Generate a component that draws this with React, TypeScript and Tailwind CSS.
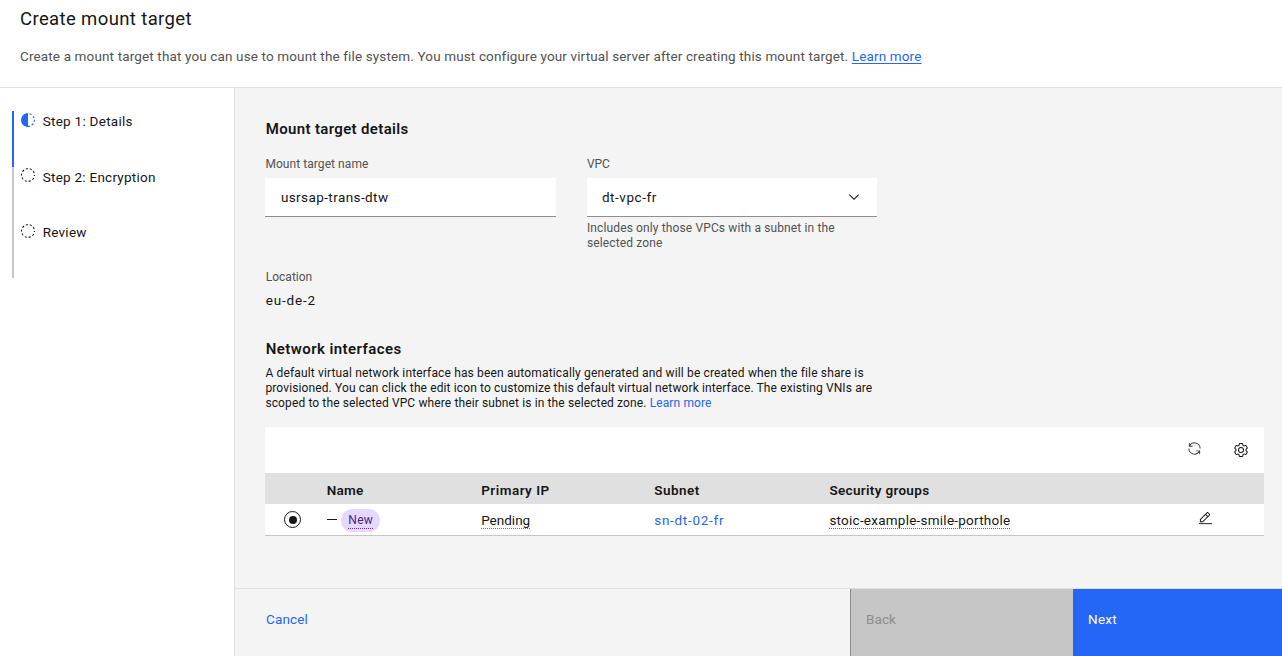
import React from 'react';

type IconProps = { className?: string };

const HalfCircleIcon = ({ className }: IconProps) => (
  <svg viewBox="0 0 16 16" className={className} fill="none">
    <path d="M8 1a7 7 0 0 0 0 14z" fill="#2466f6" />
    <path d="M8 1.6a6.4 6.4 0 0 1 0 12.8" stroke="#2466f6" strokeWidth="1.1" strokeDasharray="2.2 1.8" strokeDashoffset="-1.6" />
  </svg>
);

const DashedCircleIcon = ({ className }: IconProps) => (
  <svg viewBox="0 0 16 16" className={className} fill="none">
    <circle cx="8" cy="8" r="6.45" stroke="#161616" strokeWidth="1.1" strokeDasharray="2.05 2" strokeDashoffset="1" />
  </svg>
);

const ChevronIcon = ({ className }: IconProps) => (
  <svg viewBox="0 0 16 16" className={className} fill="#161616">
    <path d="M8 11 3 6l.7-.7L8 9.6l4.3-4.3.7.7z" />
  </svg>
);

const RenewIcon = ({ className }: IconProps) => (
  <svg viewBox="0 0 32 32" className={className} fill="#3c3c3c">
    <path d="M12 10H6.78A11 11 0 0 1 27 16h2A13 13 0 0 0 6 7.68V4H4v8h8z" />
    <path d="M20 22h5.22A11 11 0 0 1 5 16H3a13 13 0 0 0 23 8.32V28h2v-8h-8z" />
  </svg>
);

const SettingsIcon = ({ className }: IconProps) => (
  <svg viewBox="0 0 32 32" className={className} fill="#161616">
    <path d="M27,16.76c0-.25,0-.5,0-.76s0-.51,0-.77l1.92-1.68A2,2,0,0,0,29.3,11L26.94,7a2,2,0,0,0-1.73-1,2,2,0,0,0-.64.1l-2.43.82a11.35,11.35,0,0,0-1.31-.75l-.51-2.52a2,2,0,0,0-2-1.61H13.64a2,2,0,0,0-2,1.61l-.51,2.52a11.48,11.48,0,0,0-1.32.75L7.43,6.06A2,2,0,0,0,6.79,6,2,2,0,0,0,5.06,7L2.7,11a2,2,0,0,0,.41,2.51L5,15.24c0,.25,0,.5,0,.76s0,.51,0,.77L3.11,18.45A2,2,0,0,0,2.7,21L5.06,25a2,2,0,0,0,1.73,1,2,2,0,0,0,.64-.1l2.43-.82a11.35,11.35,0,0,0,1.31.75l.51,2.52a2,2,0,0,0,2,1.61h4.72a2,2,0,0,0,2-1.61l.51-2.52a11.48,11.48,0,0,0,1.32-.75l2.42.82a2,2,0,0,0,.64.1,2,2,0,0,0,1.73-1L29.3,21a2,2,0,0,0-.41-2.51ZM25.21,24l-3.43-1.16a8.86,8.86,0,0,1-2.71,1.57L18.36,28H13.64l-.71-3.55a9.36,9.36,0,0,1-2.7-1.57L6.79,24,4.43,20l2.72-2.4a8.9,8.9,0,0,1,0-3.13L4.43,12,6.79,8l3.43,1.16a8.86,8.86,0,0,1,2.71-1.57L13.64,4h4.72l.71,3.55a9.36,9.36,0,0,1,2.7,1.57L25.21,8,27.57,12l-2.72,2.4a8.9,8.9,0,0,1,0,3.13L27.57,20Z" />
    <path d="M16 22a6 6 0 1 1 6-6 5.94 5.94 0 0 1-6 6Zm0-10a4 4 0 0 0 0 8 4 4 0 0 0 0-8Z" />
  </svg>
);

const EditIcon = ({ className }: IconProps) => (
  <svg viewBox="0 0 32 32" className={className} fill="#161616">
    <path d="M2 26h28v2H2z" />
    <path d="M25.4 9c.8-.8.8-2 0-2.8l-3.6-3.6c-.8-.8-2-.8-2.8 0l-15 15V24h6.4L25.4 9zM20.4 4 24 7.6l-3 3L17.4 7l3-3zM6 22v-3.6l10-10 3.6 3.6-10 10H6z" />
  </svg>
);

const steps = [
  { label: 'Step 1: Details', tracking: 'tracking-[0.27px]', bar: 'h-[55.5px] border-[#2466f6]', Icon: HalfCircleIcon },
  { label: 'Step 2: Encryption', tracking: 'tracking-[0.255px]', bar: 'h-[55.5px] border-[#c6c6c6]', Icon: DashedCircleIcon },
  { label: 'Review', tracking: 'tracking-[0.25px]', bar: 'h-[56px] border-[#c6c6c6]', Icon: DashedCircleIcon },
];

function Sidebar() {
  return (
    <nav className="w-[235px] shrink-0 border-r border-[#e0e0e0] bg-white pt-[23px] pl-3">
      {steps.map(({ label, tracking, bar, Icon }) => (
        <div key={label} className={`flex items-start border-l-2 pl-[5px] ${bar}`}>
          <Icon className="mt-[0.8px] ml-[0.8px] size-4" />
          <span className={`ml-[6.9px] pt-[0.4px] leading-5 ${tracking}`}>{label}</span>
        </div>
      ))}
    </nav>
  );
}

function Fields() {
  return (
    <div className="flex gap-[30.5px]">
      <div className="w-[291px]">
        <div className="h-5 pt-px text-xs leading-5 tracking-[0.065px] text-[#525252]">Mount target name</div>
        <div className="mt-[5px] flex h-[39px] items-center border-b border-[#8d8d8d] bg-white pl-[15.5px]">
          <span className="tracking-[0.41px]">usrsap-trans-dtw</span>
        </div>
      </div>
      <div className="w-[290.5px]">
        <div className="h-5 pt-px text-xs leading-5 text-[#525252]">VPC</div>
        <div className="mt-[5px] flex h-[39px] items-center justify-between border-b border-[#8d8d8d] bg-white pr-[15px] pl-[15px]">
          <span className="tracking-[0.56px]">dt-vpc-fr</span>
          <ChevronIcon className="size-4" />
        </div>
        <p className="mt-[4px] text-xs leading-[15.4px] tracking-[0.13px] text-[#525252]">
          Includes only those VPCs with a subnet in the
          <br />
          selected zone
        </p>
      </div>
    </div>
  );
}

const grid = 'grid grid-cols-[61.3px_154.5px_173px_175.2px_1fr_66px] items-center';

function InterfaceTable() {
  return (
    <div className="mt-[15px] w-[999px] bg-white">
      <div className="flex h-[46px] items-start justify-end pr-[15px]">
        <RenewIcon className="mt-3.5 size-[15px]" />
        <SettingsIcon className="mt-[15px] ml-[31px] size-4" />
      </div>
      <div className={`${grid} h-[31px] bg-[#e0e0e0] pt-[3px] font-semibold`}>
        <span />
        <span className="tracking-[0.3px]">Name</span>
        <span className="tracking-[0.49px]">Primary IP</span>
        <span className="tracking-[0.46px]">Subnet</span>
        <span className="tracking-[0.33px]">Security groups</span>
        <span />
      </div>
      <div className={`${grid} h-8 border-b border-[#c6c6c6] pt-px`}>
        <span className="ml-[19px] flex size-[17px] items-center justify-center rounded-full border border-[#161616]">
          <span className="size-2 rounded-full bg-[#161616]" />
        </span>
        <span className="flex items-center">
          <span className="mb-px h-px w-2.5 bg-[#161616]" />
          <span className="mt-px ml-[4.5px] flex h-[23px] w-[39px] justify-center rounded-full bg-[#e4d9fd] pt-[3px] text-xs leading-4 tracking-[0.3px] text-[#491d8b]">
            <span className="h-[17px] border-b border-dotted border-[#6929c4]">New</span>
          </span>
        </span>
        <span>
          <span className="inline-block h-[18px] border-b border-dotted border-[#6f6f6f] leading-[18px]">Pending</span>
        </span>
        <span className="tracking-[0.72px] text-[#2466f6]">sn-dt-02-fr</span>
        <span>
          <span className="inline-block h-[18px] border-b border-dotted border-[#2466f6] leading-[18px] tracking-[0.24px]">
            stoic-example-smile-porthole
          </span>
        </span>
        <EditIcon className="mb-[3px] size-[15px]" />
      </div>
    </div>
  );
}

export default function App() {
  return (
    <div className="flex h-[656px] w-[1282px] flex-col overflow-hidden bg-white font-['Roboto',sans-serif] text-[13.5px] leading-5 text-[#161616]">
      <header className="h-[88px] shrink-0 border-b border-[#e0e0e0] pl-5">
        <h1 className="pt-[5px] text-[18.5px] leading-7 tracking-[0.38px]">Create mount target</h1>
        <p className="mt-[13px] whitespace-nowrap tracking-[0.139px] text-[#525252]">
          Create a mount target that you can use to mount the file system. You must configure your virtual server after creating this mount target.{' '}
          <a className="tracking-[0.13px] text-[#2466f6] underline underline-offset-2">Learn more</a>
        </p>
      </header>
      <div className="flex min-h-0 flex-1">
        <Sidebar />
        <div className="flex min-w-0 flex-1 flex-col bg-[#f4f4f4]">
          <main className="min-h-0 flex-1 pt-[31px] pl-[30.4px]">
            <h2 className="pl-[0.4px] text-[15px] leading-5 font-semibold tracking-[0.34px]">Mount target details</h2>
            <div className="mt-3.5">
              <Fields />
            </div>
            <div className="mt-[15px] pl-[0.4px] text-xs leading-5 text-[#525252]">Location</div>
            <div className="mt-[3px] pl-[0.4px] tracking-[0.8px]">eu-de-2</div>
            <h2 className="mt-[29px] pl-[0.4px] text-[15px] leading-5 font-semibold tracking-[0.42px]">Network interfaces</h2>
            <p className="mt-[6.7px] text-xs leading-[15.4px] whitespace-nowrap">
              <span className="tracking-[0.151px]">
                A default virtual network interface has been automatically generated and will be created when the file share is
              </span>
              <br />
              <span className="tracking-[0.122px]">
                provisioned. You can click the edit icon to customize this default virtual network interface. The existing VNIs are
              </span>
              <br />
              <span className="tracking-[0.118px]">
                scoped to the selected VPC where their subnet is in the selected zone.{' '}
                <a className="text-[#2466f6]">Learn more</a>
              </span>
            </p>
            <InterfaceTable />
          </main>
          <footer className="flex h-[68px] shrink-0 border-t border-[#e0e0e0]">
            <button className="flex flex-1 pt-[20px] pl-[31px] tracking-[0.15px] text-[#2466f6]">Cancel</button>
            <button className="flex w-[223px] border-l border-[#8d8d8d] bg-[#c6c6c6] pt-[20px] pl-[15px] tracking-[0.08px] text-[#8d8d8d]">
              Back
            </button>
            <button className="flex w-[209px] bg-[#2466f6] pt-[20px] pl-[15px] tracking-[0.27px] text-white">Next</button>
          </footer>
        </div>
      </div>
    </div>
  );
}
